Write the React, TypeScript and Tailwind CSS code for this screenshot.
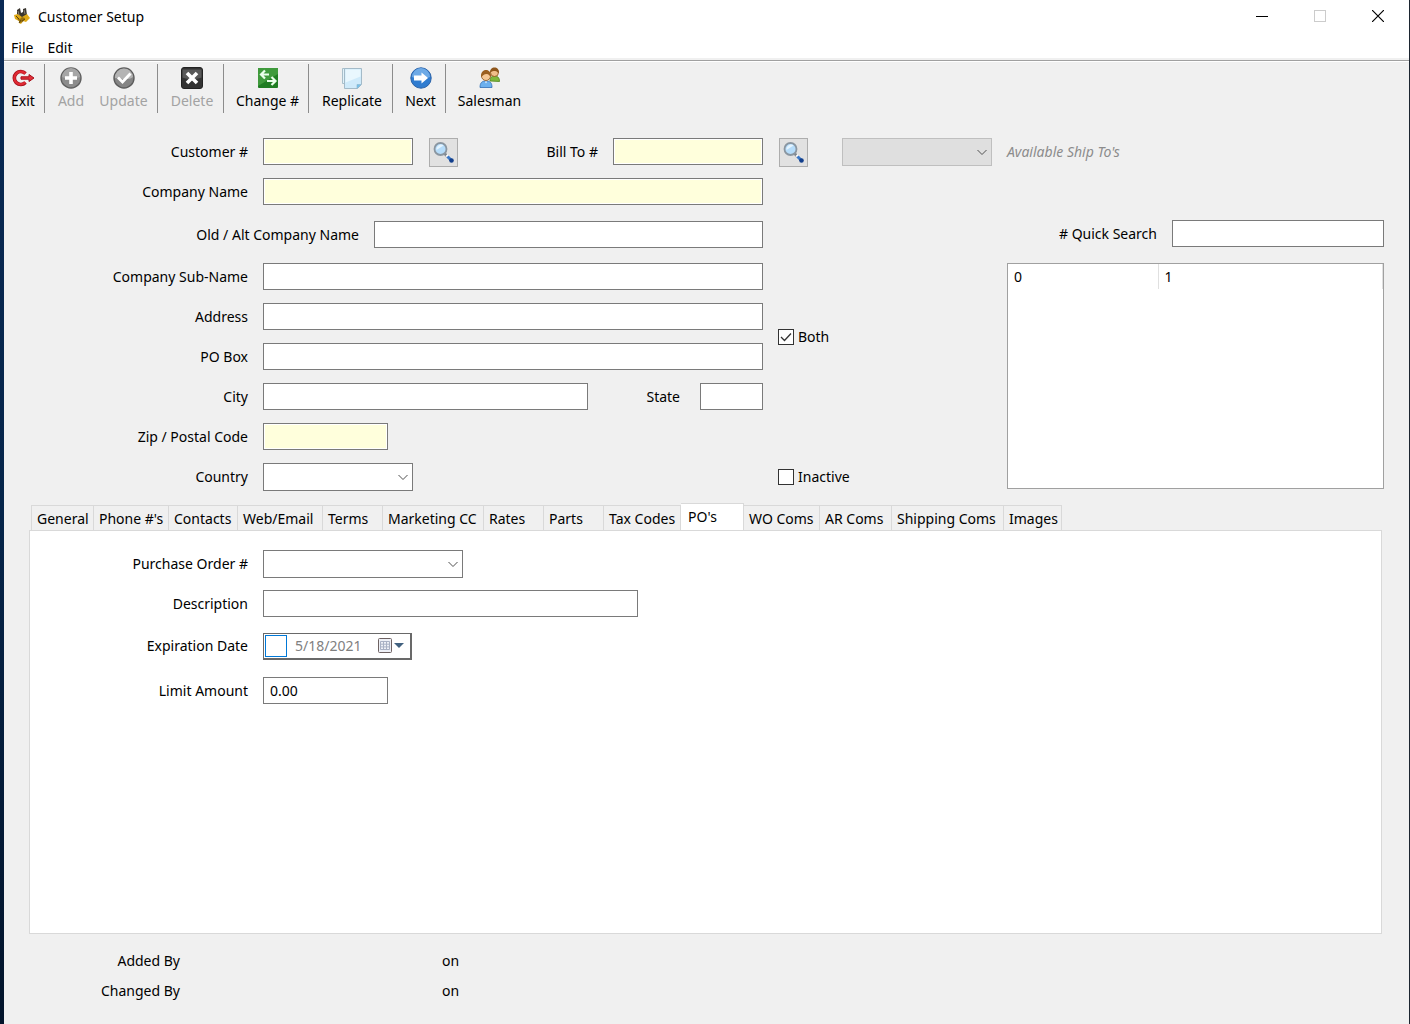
import React, { useState } from "react";
import clsx from "clsx";

// ** icons
const AppIcon = () => (
  <svg width="16" height="18" viewBox="0 0 16 18" aria-hidden="true">
    <path d="M3 3l3-2 1 5 2-1V2l3-1 1 7-4 3-6-2z" fill="#3a3630" />
    <path d="M0 8l4-1 4 3 5-3 3 4-4 4-3-1-2 3-2-1v-2l-4-2z" fill="#e0aa16" />
    <path d="M4 4l1 4M10 3l1 4" stroke="#8b8472" />
    <path d="M2 9l3 3M7 13l-2 3M11 12l-3 2" stroke="#5c430a" />
    <path d="M3 11l3 1 2-2 3 1-2 4-3 1z" fill="#6b4e0c" opacity="0.6" />
  </svg>
);

const ExitIcon = () => (
  <svg width="24" height="24" viewBox="0 0 24 24" aria-hidden="true">
    <path d="M14.500 7.500A6.500 6.500 0 1 0 14.500 16.500" fill="none" stroke="#a8101a" strokeWidth="3.600" />
    <path d="M14.300 7.700A6.300 6.300 0 1 0 14.300 16.300" fill="none" stroke="#e02a33" strokeWidth="2.200" />
    <path d="M10 10.800h8V8.500l5 3.500-5 3.500v-2.300h-8z" fill="#e0303a" stroke="#a8101a" />
  </svg>
);

const AddIcon = () => (
  <svg width="24" height="24" viewBox="0 0 24 24" aria-hidden="true">
    <circle cx="12" cy="12" r="10" fill="#8c8c8c" stroke="#606060" strokeWidth="1.400" />
    <path d="M3 11a9 9 0 0 1 18 0c-5 2-13 2-18 0z" fill="#a6a6a6" />
    <path d="M10.200 6h3.600v4.200H18v3.600h-4.200V18h-3.600v-4.200H6v-3.600h4.200z" fill="#fff" />
  </svg>
);

const UpdateIcon = () => (
  <svg width="24" height="24" viewBox="0 0 24 24" aria-hidden="true">
    <circle cx="12" cy="12" r="10" fill="#858585" stroke="#5c5c5c" strokeWidth="1.400" />
    <path d="M3 12a9 9 0 0 1 18-1c-5 4-13 1-18 1z" fill="#b4b4b4" />
    <path d="M6 11.500l4.500 4.500L18.500 7.500" fill="none" stroke="#fff" strokeWidth="2.800" />
  </svg>
);

const DeleteIcon = () => (
  <svg width="24" height="24" viewBox="0 0 24 24" aria-hidden="true">
    <rect x="1.500" y="1.500" width="21" height="21" rx="2.500" fill="#333" stroke="#222" />
    <path d="M2.500 3.500h19v8c-6 2-13 2-19 0z" fill="#595959" />
    <path d="M7 7l10 10M17 7L7 17" stroke="#fff" strokeWidth="3.600" />
  </svg>
);

const ChangeIcon = () => (
  <svg width="24" height="24" viewBox="0 0 24 24" aria-hidden="true">
    <rect x="2" y="2" width="20" height="20" rx="1" fill="#1f7d22" />
    <path d="M2 2h20v6L2 20z" fill="#3f9a3c" />
    <path d="M13 8.500H5.500M9 4.500L5 8.500l4 4M11 15h8M15.500 11l4 4-4 4" fill="none" stroke="#eaffea" strokeWidth="2.200" />
  </svg>
);

const ReplicateIcon = () => (
  <svg width="24" height="24" viewBox="0 0 24 24" aria-hidden="true">
    <path d="M2.500 2.500h13v15h-13z" fill="#e2f2fa" stroke="#a9bfcb" />
    <path d="M4.500 2.500h17v16l-4 4h-13z" fill="#cfeafa" stroke="#a3bac8" />
    <path d="M5.500 3.500h15v7l-15 6z" fill="#e9f7fe" />
    <path d="M21 18.500h-4v4z" fill="#6fc0ee" stroke="#8fb4c8" strokeWidth="0.600" />
  </svg>
);

const NextIcon = () => (
  <svg width="24" height="24" viewBox="0 0 24 24" aria-hidden="true">
    <circle cx="12" cy="12" r="10.200" fill="#2f7cd0" stroke="#2a62a8" />
    <path d="M3 11a9 9 0 0 1 18 0c-5 2-13 2-18 0z" fill="#6eaae6" />
    <path d="M5 9.500h7.500V6.500l6.500 5.500-6.500 5.500v-3H5z" fill="#fff" />
  </svg>
);

const SalesmanIcon = () => (
  <svg width="24" height="24" viewBox="0 0 24 24" aria-hidden="true">
    <path d="M12 15c0-4 2-5 4.500-5s5 1 5 5.500z" fill="#7fb93c" stroke="#4c8418" strokeWidth="0.800" />
    <circle cx="16.500" cy="6.500" r="4" fill="#f0bf8b" stroke="#8a5217" strokeWidth="0.800" />
    <path d="M12 7c0-4 2-5.500 4.500-5.500S21 3 21 7c-1.500 0-2-2-4-2s-3 0-5 2z" fill="#8f571c" />
    <path d="M2 21.500c0-5 2-6.500 6-6.500s6 1.500 6 6.500z" fill="#6cb0ee" stroke="#2f6db5" strokeWidth="0.800" />
    <circle cx="8" cy="10" r="4.500" fill="#f5c896" stroke="#8a5217" strokeWidth="0.800" />
    <path d="M3 11c0-5 2-7 5-7s5 2 5 7c-1.500-1-2-3-4.500-3S5 9.500 3 11z" fill="#9a5f20" />
    <path d="M7 15.500l1 2 1-2z" fill="#fff" />
  </svg>
);

const SearchIcon = () => (
  <svg width="23" height="23" viewBox="0 0 23 23" aria-hidden="true">
    <path d="M12.500 12.500l3 3" stroke="#7d848c" strokeWidth="2.600" />
    <path d="M14.500 14l1.500 1.500" stroke="#fff" strokeWidth="2.600" />
    <path d="M15.500 15.500l4 4" stroke="#3a78c8" strokeWidth="3" />
    <circle cx="19.500" cy="19.500" r="2.300" fill="#123f8c" />
    <circle cx="8.500" cy="8" r="6" fill="#b5dcfa" stroke="#8a96a1" strokeWidth="1.800" />
    <path d="M4.500 9a4.500 4.500 0 0 1 7-4.500z" fill="#e4f4ff" />
  </svg>
);

const Chevron = () => (
  <svg
    className="pointer-events-none absolute top-1/2 right-1 -translate-y-1/2"
    width="12"
    height="8"
    viewBox="0 0 12 8"
    aria-hidden="true"
  >
    <path d="M1.500 2L6 6.500 10.500 2" fill="none" stroke="#505050" />
  </svg>
);

// ** data
const toolbarGroups = [
  [{ name: "Exit", icon: <ExitIcon />, width: "w-6" }],
  [
    { name: "Add", icon: <AddIcon />, width: "w-7", disabled: true },
    { name: "Update", icon: <UpdateIcon />, width: "w-[49px]", disabled: true },
  ],
  [{ name: "Delete", icon: <DeleteIcon />, width: "w-11", disabled: true }],
  [{ name: "Change #", icon: <ChangeIcon />, width: "w-[63px]" }],
  [{ name: "Replicate", icon: <ReplicateIcon />, width: "w-[62px]" }],
  [{ name: "Next", icon: <NextIcon />, width: "w-[31px]" }],
  [{ name: "Salesman", icon: <SalesmanIcon />, width: "w-[63px]" }],
];

const tabs = [
  { name: "General", width: "w-[63px]" },
  { name: "Phone #'s", width: "w-[75px]" },
  { name: "Contacts", width: "w-[69px]" },
  { name: "Web/Email", width: "w-[85px]" },
  { name: "Terms", width: "w-[60px]" },
  { name: "Marketing CC", width: "w-[101px]" },
  { name: "Rates", width: "w-[60px]" },
  { name: "Parts", width: "w-[60px]" },
  { name: "Tax Codes", width: "w-[77px]" },
  { name: "PO's", width: "w-[63px]" },
  { name: "WO Coms", width: "w-[76px]" },
  { name: "AR Coms", width: "w-[72px]" },
  { name: "Shipping Coms", width: "w-[112px]" },
  { name: "Images", width: "w-[58px]" },
];

// ** form parts
type LabelProps = { htmlFor: string; className?: string; children: React.ReactNode };

const Label = ({ htmlFor, className = "w-[244px]", children }: LabelProps) => (
  <label htmlFor={htmlFor} className={clsx("shrink-0 text-right whitespace-nowrap", className)}>
    {children}
  </label>
);

type TextBoxProps = { id: string; width: string; required?: boolean; value?: string };

const TextBox = ({ id, width, required, value }: TextBoxProps) => (
  <input
    id={id}
    type="text"
    defaultValue={value}
    className={clsx(
      "mb-px h-[27px] border border-[#7a7a7a] px-1.5 outline-none",
      required ? "bg-[#ffffdc] inset-ring inset-ring-white" : "bg-white",
      width
    )}
  />
);

type DropDownProps = { id: string; width: string; disabled?: boolean };

const DropDown = ({ id, width, disabled }: DropDownProps) => (
  <div className={clsx("relative shrink-0", width)}>
    <select
      id={id}
      disabled={disabled}
      className={clsx(
        "block h-7 w-full appearance-none border px-1.5 outline-none",
        disabled ? "border-[#bfbfbf] bg-[#dfdfdf]" : "border-[#7a7a7a] bg-white"
      )}
    >
      <option></option>
    </select>
    <Chevron />
  </div>
);

const SearchButton = ({ label }: { label: string }) => (
  <button
    type="button"
    aria-label={label}
    className="flex size-[29px] shrink-0 items-center justify-center border border-[#adadad] bg-[#e1e1e1]"
  >
    <SearchIcon />
  </button>
);

const CheckBox = ({ label, checked }: { label: string; checked?: boolean }) => (
  <label className="flex h-7 items-center gap-1">
    <span className="relative mb-px block size-4">
      <input
        type="checkbox"
        defaultChecked={checked}
        className="peer block size-4 appearance-none border border-[#333] bg-white"
      />
      <svg
        className="pointer-events-none absolute inset-0 hidden peer-checked:block"
        width="16"
        height="16"
        viewBox="0 0 16 16"
        aria-hidden="true"
      >
        <path d="M3 8l3.500 3.500L13 4.500" fill="none" stroke="#333" strokeWidth="1.300" />
      </svg>
    </span>
    {label}
  </label>
);

const TitleBar = () => (
  <header className="bg-white">
    <div className="flex h-8 items-center">
      <div className="flex items-center gap-2 pl-2.5">
        <AppIcon />
        <h1 className="pt-px">Customer Setup</h1>
      </div>
      <div className="mr-0.5 ml-auto flex h-full">
        <button type="button" aria-label="Minimize" className="flex w-[58px] items-center justify-center">
          <span className="h-px w-3 bg-black" />
        </button>
        <button type="button" aria-label="Maximize" disabled className="flex w-[58px] items-center justify-center">
          <span className="size-3 border border-[#ccc]" />
        </button>
        <button type="button" aria-label="Close" className="flex w-[58px] items-center justify-center">
          <svg width="12" height="12" viewBox="0 0 12 12" aria-hidden="true">
            <path d="M0 0l12 12M12 0L0 12" stroke="#000" strokeWidth="1.200" />
          </svg>
        </button>
      </div>
    </div>
    <nav className="flex h-[26px] items-center gap-3.5 pt-1.5 pl-[7px]">
      <button type="button">File</button>
      <button type="button">Edit</button>
    </nav>
  </header>
);

const Toolbar = () => (
  <div className="mt-0.5 flex border-t border-[#a0a0a0] pt-[3px] shadow-[inset_0_1px_0_#fff]">
    {toolbarGroups.map((group, index) => (
      <div
        key={index}
        className={clsx(
          "flex h-[49px] gap-3.5 pr-[9px]",
          index === 0 ? "pl-[7px]" : "border-l border-[#8c8c8c] pl-3"
        )}
      >
        {group.map(({ name, icon, width, disabled }: any) => (
          <button
            key={name}
            type="button"
            disabled={disabled}
            className={clsx(
              "flex flex-col items-center gap-px pt-0.5 whitespace-nowrap disabled:text-[#a3a3a3]",
              width
            )}
          >
            {icon}
            {name}
          </button>
        ))}
      </div>
    ))}
  </div>
);

const CustomerForm = () => (
  <div className="mt-[25px] flex flex-col gap-3">
    <div className="flex h-7 items-center">
      <Label htmlFor="customer">Customer #</Label>
      <div className="ml-[15px] flex items-center gap-4">
        <TextBox id="customer" width="w-[150px]" required />
        <SearchButton label="Find customer" />
      </div>
      <Label htmlFor="billTo" className="w-[140px]">
        Bill To #
      </Label>
      <div className="ml-[15px] flex items-center gap-4">
        <TextBox id="billTo" width="w-[150px]" required />
        <SearchButton label="Find bill to" />
      </div>
      <div className="ml-[34px] flex items-center gap-[15px]">
        <DropDown id="shipTo" width="w-[150px]" disabled />
        <label htmlFor="shipTo" className="whitespace-nowrap text-[#8c8c8c] italic">
          Available Ship To's
        </label>
      </div>
    </div>

    <div className="flex items-start">
      <div className="flex w-[759px] shrink-0 flex-col gap-3">
        <div className="flex h-7 items-center gap-[15px]">
          <Label htmlFor="company">Company Name</Label>
          <TextBox id="company" width="flex-1" required />
        </div>
        <div className="flex h-[33px] items-center gap-[15px]">
          <Label htmlFor="altCompany" className="w-[355px]">
            Old / Alt Company Name
          </Label>
          <TextBox id="altCompany" width="flex-1" />
        </div>
        <div className="flex h-7 items-center gap-[15px]">
          <Label htmlFor="subName">Company Sub-Name</Label>
          <TextBox id="subName" width="flex-1" />
        </div>
        <div className="flex h-7 items-center gap-[15px]">
          <Label htmlFor="address">Address</Label>
          <TextBox id="address" width="flex-1" />
        </div>
        <div className="flex h-7 items-center gap-[15px]">
          <Label htmlFor="poBox">PO Box</Label>
          <TextBox id="poBox" width="flex-1" />
        </div>
        <div className="flex h-7 items-center">
          <Label htmlFor="city">City</Label>
          <div className="ml-[15px] flex flex-1 items-center">
            <TextBox id="city" width="w-[325px]" />
            <Label htmlFor="state" className="mr-5 ml-auto">
              State
            </Label>
            <TextBox id="state" width="w-[63px]" />
          </div>
        </div>
        <div className="flex h-7 items-center gap-[15px]">
          <Label htmlFor="zip">Zip / Postal Code</Label>
          <TextBox id="zip" width="w-[125px]" required />
        </div>
        <div className="flex h-7 items-center gap-[15px]">
          <Label htmlFor="country">Country</Label>
          <DropDown id="country" width="w-[150px]" />
        </div>
      </div>

      <div className="flex h-[168px] flex-col justify-between self-end pl-[15px]">
        <CheckBox label="Both" checked />
        <CheckBox label="Inactive" />
      </div>

      <div className="mr-[25px] ml-auto w-[377px] pt-[42px]">
        <div className="flex items-center justify-end gap-[15px]">
          <Label htmlFor="quickSearch" className="">
            # Quick Search
          </Label>
          <TextBox id="quickSearch" width="w-[212px]" />
        </div>
        <div className="mt-[15px] h-[226px] border border-[#a0a0a0] bg-white">
          <table className="w-full table-fixed text-left">
            <thead>
              <tr className="h-[25px]">
                <th className="w-[150px] border-r border-[#e0e0e0] pl-1.5 font-normal">0</th>
                <th className="border-r border-[#e0e0e0] pl-1.5 font-normal">1</th>
              </tr>
            </thead>
          </table>
        </div>
      </div>
    </div>
  </div>
);

const TabList = ({ active, onSelect }: { active: string; onSelect: (name: string) => void }) => (
  <div role="tablist" className="flex items-end pl-0.5">
    {tabs.map(({ name, width }, index) => {
      const isActive = name === active;
      return (
        <button
          key={name}
          type="button"
          role="tab"
          aria-selected={isActive}
          onClick={() => onSelect(name)}
          className={clsx(
            "border-t border-r border-[#d9d9d9] text-left whitespace-nowrap",
            width,
            index === 0 && "border-l",
            isActive ? "-mb-px h-7 bg-white pb-0.5 pl-[7px]" : "h-[25px] bg-[#f0f0f0] pt-0.5 pl-[5px]"
          )}
        >
          {name}
        </button>
      );
    })}
  </div>
);

const PurchaseOrders = () => (
  <div className="flex flex-col gap-3 pt-[19px]">
    <div className="flex h-7 items-center gap-[15px]">
      <Label htmlFor="poNumber" className="w-[218px]">
        Purchase Order #
      </Label>
      <DropDown id="poNumber" width="w-[200px]" />
    </div>
    <div className="flex h-7 items-center gap-[15px]">
      <Label htmlFor="description" className="w-[218px]">
        Description
      </Label>
      <TextBox id="description" width="w-[375px]" />
    </div>
    <div className="flex h-8 items-center gap-[15px]">
      <Label htmlFor="expiration" className="w-[218px]">
        Expiration Date
      </Label>
      <div className="flex h-[27px] w-[149px] items-center border border-r-2 border-b-2 border-[#696969] bg-white pr-1.5 pl-px">
        <input
          type="checkbox"
          aria-label="Use expiration date"
          className="size-[22px] shrink-0 appearance-none border border-[#0078d7] bg-white"
        />
        <input
          id="expiration"
          type="text"
          defaultValue="5/18/2021"
          className="w-20 min-w-0 flex-1 pl-2 text-[#808080] outline-none"
        />
        <button type="button" aria-label="Open calendar" className="shrink-0">
          <svg width="26" height="16" viewBox="0 0 26 16" aria-hidden="true">
            <rect x="0.500" y="0.500" width="13" height="14" rx="1" fill="#eef0f6" stroke="#6e6262" />
            <path
              d="M2.500 3.500h9v8h-9zM2.500 6.200h9M2.500 8.900h9M5.500 3.500v8M8.500 3.500v8"
              fill="none"
              stroke="#a9b1c4"
            />
            <path d="M16 5h10l-5 5z" fill="#41617f" />
          </svg>
        </button>
      </div>
    </div>
    <div className="flex h-[34px] items-center gap-[15px]">
      <Label htmlFor="limit" className="w-[218px]">
        Limit Amount
      </Label>
      <TextBox id="limit" width="w-[125px]" value="0.00" />
    </div>
  </div>
);

const App = () => {
  // ** states
  const [activeTab, setActiveTab] = useState<string>("PO's");

  return (
    <div className="flex min-h-screen bg-[#f0f0f0] font-['Noto_Sans','Open_Sans',sans-serif] text-sm leading-5 text-black">
      <div className="w-1 shrink-0 bg-linear-to-b from-[#0a2a55] via-[#06254a] to-[#03142b]" />
      <main className="flex min-w-0 flex-1 flex-col border-r border-[#1c2530]">
        <TitleBar />
        <Toolbar />
        <CustomerForm />
        <section className="mt-3 mr-[27px] ml-[25px] flex flex-1 flex-col">
          <TabList active={activeTab} onSelect={setActiveTab} />
          <div role="tabpanel" className="flex-1 border border-[#d9d9d9] bg-white">
            {activeTab === "PO's" && <PurchaseOrders />}
          </div>
        </section>
        <footer className="flex flex-col gap-2.5 pt-[17px] pb-[23px]">
          <div className="flex">
            <span className="w-[176px] text-right">Added By</span>
            <span className="ml-[262px]">on</span>
          </div>
          <div className="flex">
            <span className="w-[176px] text-right">Changed By</span>
            <span className="ml-[262px]">on</span>
          </div>
        </footer>
      </main>
    </div>
  );
};

export default App;
